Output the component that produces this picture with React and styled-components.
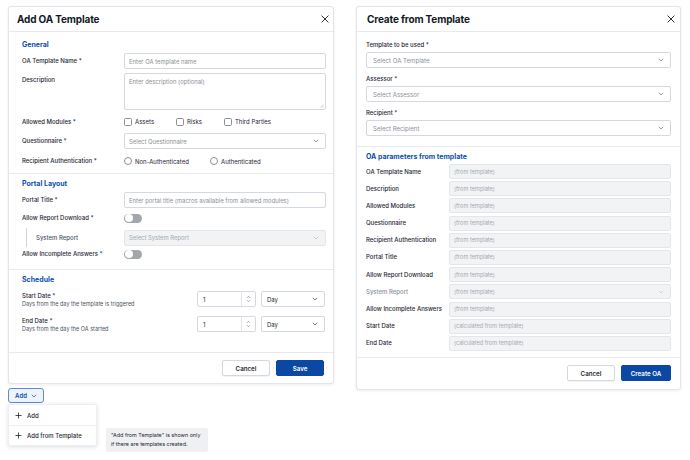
import React from "react";
import styled, { createGlobalStyle } from "styled-components";

const Global = createGlobalStyle`
  html, body { margin: 0; padding: 0; background: #ffffff; min-height: 100%; }
  body { font-family: Inter, "Noto Sans", sans-serif; color: #1e2633; -webkit-font-smoothing: antialiased; }
  * { box-sizing: border-box; }
`;

const Page = styled.div`
  display: flex;
  align-items: flex-start;
  gap: 22px;
  padding: 6px 0 0 8px;
  min-height: 460px;
`;

const LeftCol = styled.div`
  position: relative;
  width: 326px;
`;

const Modal = styled.div`
  width: ${(p) => p.$w}px;
  background: #fff;
  border: 1px solid #e3e5e9;
  border-radius: 3px;
  box-shadow: 0 1px 3px rgba(20, 30, 50, 0.08);
`;

const Header = styled.div`
  height: 25px;
  display: flex;
  align-items: center;
  justify-content: space-between;
  padding: 0 ${(p) => p.$pr}px 0 ${(p) => p.$pl}px;
  border-bottom: 1px solid #e8eaed;
`;

const Title = styled.div`
  font-size: 10px;
  font-weight: 700;
  letter-spacing: -0.15px;
  color: #111827;
`;

const Close = styled.svg`
  width: 8px;
  height: 8px;
  display: block;
`;

const Section = styled.div`
  display: flex;
  flex-direction: column;
  gap: ${(p) => p.$gap ?? 4}px;
  padding: ${(p) => p.$pad};
  border-bottom: ${(p) => (p.$last ? "none" : "1px solid #e8eaed")};
`;

const Heading = styled.div`
  height: 10px;
  line-height: 10px;
  font-size: 7px;
  font-weight: 700;
  color: #0c4eb0;
  margin-bottom: ${(p) => p.$mb ?? 0}px;
`;

const Row = styled.div`
  display: grid;
  grid-template-columns: ${(p) => p.$cols || "102px 1fr"};
  align-items: ${(p) => p.$align || "center"};
  height: ${(p) => `${p.$h || 16}px`};
`;

const Label = styled.div`
  font-size: 6px;
  font-weight: 500;
  color: ${(p) => (p.$muted ? "#8a9099" : "#1e2633")};
  line-height: 8px;
  padding-top: ${(p) => p.$pt || 0}px;
`;

const Sub = styled.div`
  font-size: 5.5px;
  font-weight: 400;
  color: #4b5563;
  line-height: 8px;
`;

const DateText = styled.div`
  padding-top: 2px;
`;

const Input = styled.div`
  height: ${(p) => p.$h || 16}px;
  border: 1px solid ${(p) => (p.$disabled ? "#e4e6ea" : "#d5d9df")};
  background: ${(p) => (p.$disabled ? "#f2f3f5" : "#fff")};
  border-radius: 2px;
  display: flex;
  align-items: ${(p) => (p.$top ? "flex-start" : "center")};
  justify-content: space-between;
  padding: ${(p) => (p.$top ? "4px" : "0")} ${(p) => p.$pr ?? 6}px 0 ${(p) => p.$pl ?? 4}px;
  font-size: ${(p) => p.$fs ?? 5.9}px;
  white-space: nowrap;
  color: ${(p) => (p.$disabled ? "#a4a9b1" : "#8b9098")};
  position: relative;
`;

const Grip = styled.svg`
  position: absolute;
  right: 1px;
  bottom: 1px;
  width: 4px;
  height: 4px;
`;

const Chevron = ({ color = "#6b7280" }) => (
  <svg width="6" height="4" viewBox="0 0 6 4" style={{ display: "block" }}>
    <path d="M0.8 0.8 L3 3 L5.2 0.8" fill="none" stroke={color} strokeWidth="0.7" />
  </svg>
);

const Options = styled.div`
  display: flex;
  align-items: center;
`;

const Option = styled.label`
  display: flex;
  align-items: center;
  gap: 3px;
  width: ${(p) => p.$w}px;
  font-size: 6px;
  color: #1e2633;
`;

const Check = styled.span`
  width: 8px;
  height: 8px;
  border: 1px solid #8b9098;
  border-radius: ${(p) => (p.$round ? "50%" : "1.5px")};
  background: #fff;
  display: inline-block;
`;

const ToggleCell = styled.div`
  display: flex;
  align-items: center;
`;

const Toggle = styled.span`
  width: 18px;
  height: 9px;
  border-radius: 5px;
  background: #a2a6ad;
  position: relative;
  display: block;
  &::after {
    content: "";
    position: absolute;
    left: 0.5px;
    top: 0.5px;
    width: 8px;
    height: 8px;
    border-radius: 50%;
    background: #fff;
  }
`;

const Indent = styled.div`
  display: grid;
  grid-template-columns: 102px 1fr;
  align-items: center;
  height: 16px;
`;

const IndentLabel = styled.div`
  border-left: 1px solid #d0d4da;
  margin-left: 4px;
  height: 19px;
  display: flex;
  align-items: center;
  padding-left: 9px;
  font-size: 6px;
  font-weight: 500;
  color: #4b5563;
`;

const Controls = styled.div`
  display: flex;
  gap: 5px;
`;

const Num = styled.div`
  width: 59px;
  height: 16px;
  border: 1px solid #d5d9df;
  border-radius: 2px;
  display: flex;
  font-size: 6px;
  color: #1e2633;
`;

const NumVal = styled.div`
  flex: 1;
  display: flex;
  align-items: center;
  padding-left: 5px;
  border-right: 1px solid #e1e4e8;
`;

const Spin = styled.div`
  width: 13px;
  display: flex;
  align-items: center;
  justify-content: center;
`;

const DaySel = styled.div`
  width: 64px;
  height: 16px;
  border: 1px solid #d5d9df;
  border-radius: 2px;
  display: flex;
  align-items: center;
  justify-content: space-between;
  padding: 0 6px 0 5px;
  font-size: 6px;
  color: #1e2633;
`;

const Footer = styled.div`
  height: ${(p) => p.$h}px;
  border-top: 1px solid #e8eaed;
  display: flex;
  justify-content: flex-end;
  align-items: center;
  gap: 6px;
  padding-right: ${(p) => p.$pr}px;
`;

const Button = styled.button`
  height: 16px;
  width: ${(p) => p.$w}px;
  border-radius: 2px;
  font-family: inherit;
  font-size: 6.2px;
  font-weight: 600;
  padding: 0;
  border: 1px solid ${(p) => (p.$primary ? "#0a48a3" : "#d5d9df")};
  background: ${(p) => (p.$primary ? "#0a48a3" : "#fff")};
  color: ${(p) => (p.$primary ? "#fff" : "#1e2633")};
  box-shadow: ${(p) => (p.$primary ? "none" : "0 1px 1px rgba(0,0,0,0.05)")};
`;

const AddWrap = styled.div`
  position: relative;
  width: 36px;
`;

const AddBtn = styled.button`
  margin-top: 4px;
  height: 15px;
  width: 36px;
  border: 1px solid #5b8ad6;
  background: #eef3fc;
  border-radius: 3px;
  display: flex;
  align-items: center;
  justify-content: center;
  gap: 4px;
  font-family: inherit;
  font-size: 6px;
  font-weight: 600;
  color: #0c4eb0;
  padding: 0;
`;

const Menu = styled.div`
  position: absolute;
  left: 0;
  top: calc(100% + 1px);
  width: 89px;
  background: #fff;
  border-radius: 2px;
  border: 1px solid #eceef1;
  box-shadow: 0 1px 4px rgba(20, 30, 50, 0.14);
  display: flex;
  flex-direction: column;
  z-index: 2;
`;

const MenuItem = styled.div`
  height: 20px;
  display: flex;
  align-items: center;
  gap: 5px;
  padding-left: 6px;
  font-size: 6px;
  font-weight: 500;
  color: #1e2633;
  white-space: nowrap;
  border-top: ${(p) => (p.$first ? "none" : "1px solid #eceef1")};
`;

const Tip = styled.div`
  position: absolute;
  left: 98px;
  top: calc(100% + 25px);
  width: 102px;
  height: 24px;
  background: #eff0f2;
  border-radius: 2px;
  padding: 3px 0 0 5px;
  font-size: 5.4px;
  line-height: 9px;
  color: #1e2633;
  white-space: nowrap;
  z-index: 2;
`;

const Plus = () => (
  <svg width="7" height="7" viewBox="0 0 7 7" style={{ display: "block" }}>
    <path d="M3.5 0.5 V6.5 M0.5 3.5 H6.5" stroke="#1e2633" strokeWidth="0.8" />
  </svg>
);

const X = () => (
  <Close viewBox="0 0 8 8">
    <path d="M0.6 0.6 L7.4 7.4 M7.4 0.6 L0.6 7.4" stroke="#111827" strokeWidth="0.9" />
  </Close>
);

const FieldStack = styled.div`
  display: flex;
  flex-direction: column;
  gap: 3px;
`;

const ParamRows = styled.div`
  display: flex;
  flex-direction: column;
  gap: 2.2px;
`;

const ParamRow = styled.div`
  display: grid;
  grid-template-columns: 83px 1fr;
  align-items: center;
  height: 15px;
`;

const SpinIcon = () => (
  <svg width="5" height="8" viewBox="0 0 5 8" style={{ display: "block" }}>
    <path d="M1 2.8 L2.5 1.3 L4 2.8 M1 5.2 L2.5 6.7 L4 5.2" fill="none" stroke="#6b7280" strokeWidth="0.6" />
  </svg>
);

const params = [
  ["OA Template Name", "(from template)"],
  ["Description", "(from template)"],
  ["Allowed Modules", "(from template)"],
  ["Questionnaire", "(from template)"],
  ["Recipient Authentication", "(from template)"],
  ["Portal Title", "(from template)"],
  ["Allow Report Download", "(from template)"],
  ["System Report", "(from template)", true],
  ["Allow Incomplete Answers", "(from template)"],
  ["Start Date", "(calculated from template)"],
  ["End Date", "(calculated from template)"],
];

export default function App() {
  return (
    <>
      <Global />
      <Page>
        <LeftCol>
          <Modal $w={326}>
            <Header $pl={8} $pr={4}>
              <Title>Add OA Template</Title>
              <X />
            </Header>
            <Section $pad="8px 7px 4px 13px">
              <Heading $mb={-1}>General</Heading>
              <Row>
                <Label>OA Template Name *</Label>
                <Input>Enter OA template name</Input>
              </Row>
              <Row $h={37} $align="start">
                <Label $pt={3}>Description</Label>
                <Input $h={37} $top>
                  Enter description (optional)
                  <Grip viewBox="0 0 4 4">
                    <path d="M0.5 3.5 L3.5 0.5 M2 3.5 L3.5 2" stroke="#9aa0a8" strokeWidth="0.5" />
                  </Grip>
                </Input>
              </Row>
              <Row $h={15}>
                <Label>Allowed Modules *</Label>
                <Options>
                  <Option $w={52}><Check />Assets</Option>
                  <Option $w={48}><Check />Risks</Option>
                  <Option $w={60}><Check />Third Parties</Option>
                </Options>
              </Row>
              <Row>
                <Label>Questionnaire *</Label>
                <Input>Select Questionnaire<Chevron /></Input>
              </Row>
              <Row>
                <Label>Recipient Authentication *</Label>
                <Options>
                  <Option $w={86}><Check $round />Non-Authenticated</Option>
                  <Option $w={60}><Check $round />Authenticated</Option>
                </Options>
              </Row>
            </Section>
            <Section $pad="5px 7px 8px 13px" $gap={3}>
              <Heading>Portal Layout</Heading>
              <Row>
                <Label>Portal Title *</Label>
                <Input>Enter portal title (macros available from allowed modules)</Input>
              </Row>
              <Row $h={14}>
                <Label>Allow Report Download *</Label>
                <ToggleCell><Toggle /></ToggleCell>
              </Row>
              <Indent>
                <IndentLabel>System Report</IndentLabel>
                <Input $disabled>Select System Report<Chevron color="#b5b9c0" /></Input>
              </Indent>
              <Row $h={14}>
                <Label>Allow Incomplete Answers *</Label>
                <ToggleCell><Toggle /></ToggleCell>
              </Row>
            </Section>
            <Section $pad="5px 8px 21px 13px" $gap={9} $last>
              <Heading $mb={-4}>Schedule</Heading>
              <Row $cols="1fr auto">
                <DateText>
                  <Label>Start Date *</Label>
                  <Sub>Days from the day the template is triggered</Sub>
                </DateText>
                <Controls>
                  <Num><NumVal>1</NumVal><Spin><SpinIcon /></Spin></Num>
                  <DaySel>Day<Chevron color="#374151" /></DaySel>
                </Controls>
              </Row>
              <Row $cols="1fr auto">
                <DateText>
                  <Label>End Date *</Label>
                  <Sub>Days from the day the OA started</Sub>
                </DateText>
                <Controls>
                  <Num><NumVal>1</NumVal><Spin><SpinIcon /></Spin></Num>
                  <DaySel>Day<Chevron color="#374151" /></DaySel>
                </Controls>
              </Row>
            </Section>
            <Footer $h={31} $pr={9}>
              <Button $w={48}>Cancel</Button>
              <Button $w={48} $primary>Save</Button>
            </Footer>
          </Modal>
          <AddWrap>
            <AddBtn>
              Add
              <Chevron color="#0c4eb0" />
            </AddBtn>
            <Menu>
              <MenuItem $first><Plus />Add</MenuItem>
              <MenuItem><Plus />Add from Template</MenuItem>
            </Menu>
            <Tip>
              "Add from Template" is shown only
              <br />
              if there are templates created.
            </Tip>
          </AddWrap>
        </LeftCol>
        <Modal $w={325}>
          <Header $pl={10} $pr={5}>
            <Title>Create from Template</Title>
            <X />
          </Header>
          <Section $pad="9px 9px 10px 9px" $gap={7}>
            <FieldStack>
              <Label>Template to be used *</Label>
              <Input $pl={6} $fs={6.1}>Select OA Template<Chevron /></Input>
            </FieldStack>
            <FieldStack>
              <Label>Assessor *</Label>
              <Input $pl={6} $fs={6.1}>Select Assessor<Chevron /></Input>
            </FieldStack>
            <FieldStack>
              <Label>Recipient *</Label>
              <Input $pl={6} $fs={6.1}>Select Recipient<Chevron /></Input>
            </FieldStack>
          </Section>
          <Section $pad="5px 9px 6px 9px" $gap={2} $last>
            <Heading>OA parameters from template</Heading>
            <ParamRows>
              {params.map(([l, v, muted]) => (
                <ParamRow key={l}>
                  <Label $muted={muted}>{l}</Label>
                  <Input $h={15} $disabled $pl={4} $fs={5.6}>
                    {v}
                    {muted ? <Chevron color="#c4c8ce" /> : null}
                  </Input>
                </ParamRow>
              ))}
            </ParamRows>
          </Section>
          <Footer $h={32} $pr={9}>
            <Button $w={48}>Cancel</Button>
            <Button $w={50} $primary>Create OA</Button>
          </Footer>
        </Modal>
      </Page>
    </>
  );
}
